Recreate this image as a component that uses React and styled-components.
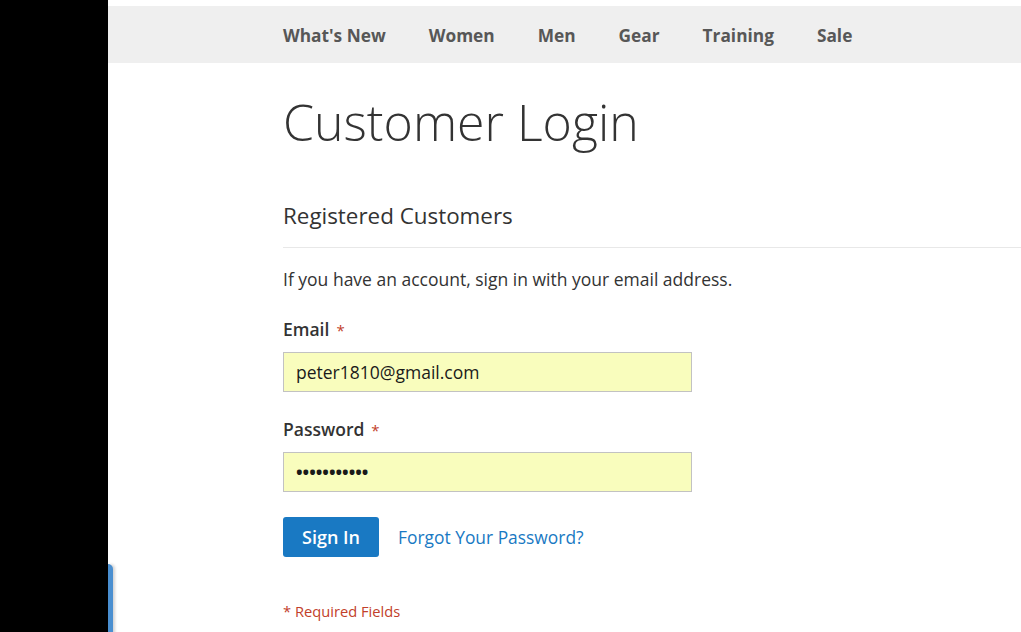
import React from 'react'
import styled, { createGlobalStyle } from 'styled-components'

const GlobalStyle = createGlobalStyle`
  html, body {
    margin: 0;
    padding: 0;
    background: #ffffff;
  }
  body {
    font-family: "Open Sans", "Liberation Sans", sans-serif;
    color: #333333;
    overflow: hidden;
  }
`

const Page = styled.div`
  display: flex;
  height: 632px;
  position: relative;
`

const SideBar = styled.div`
  width: 108px;
  flex-shrink: 0;
  background: #000000;
`

const FeedbackTab = styled.div`
  position: absolute;
  left: 108px;
  top: 564px;
  width: 5px;
  height: 80px;
  background: #4a8fd0;
  border-radius: 0 5px 0 0;
  box-shadow: 2px 0 3px rgba(0, 0, 0, 0.18);
`

const Main = styled.div`
  flex: 1;
  padding-top: 6px;
  min-width: 0;
`

const NavBar = styled.nav`
  box-sizing: border-box;
  display: flex;
  align-items: center;
  height: 57px;
  background: #efefef;
  padding: 2px 0 0 175px;
`

const NavItem = styled.a`
  font-weight: 700;
  font-size: 17.3px;
  color: #575757;
  text-decoration: none;
  margin-right: ${p => p.$gap}px;
`

const Content = styled.div`
  padding-left: 175px;
`

const Title = styled.h1`
  margin: 26px 0 0;
  font-weight: 300;
  font-size: 50px;
  line-height: 66px;
  color: #333333;
`

const BlockTitle = styled.div`
  margin-top: 45px;
  padding-bottom: 16px;
  border-bottom: 1px solid #e8e8e8;
  font-size: 22.4px;
  line-height: 31px;
  color: #333333;
`

const Intro = styled.p`
  margin: 18px 0 0;
  font-size: 17.5px;
  line-height: 26px;
  color: #333333;
`

const Field = styled.div`
  margin-top: ${p => p.$top}px;
`

const Label = styled.label`
  display: block;
  font-weight: 600;
  font-size: 17.5px;
  line-height: 26px;
  color: #333333;

  &::after {
    content: '*';
    color: #c2402a;
    font-size: 15px;
    font-weight: 400;
    margin-left: 7px;
  }
`

const Input = styled.div`
  box-sizing: border-box;
  width: 409px;
  height: 40px;
  margin-top: ${p => p.$top}px;
  background: #f9fdbd;
  border: 1px solid #c2c2c2;
  padding: 0 12px;
  display: flex;
  align-items: center;
  font-size: 17.5px;
  color: #1a1a1a;
  font-weight: ${p => (p.$secret ? 700 : 400)};
`

const Actions = styled.div`
  display: flex;
  align-items: center;
  margin-top: 25px;
`

const PrimaryButton = styled.button`
  box-sizing: border-box;
  width: 96px;
  height: 40px;
  border: none;
  border-radius: 3px;
  background: #1979c3;
  color: #ffffff;
  font-family: "Open Sans", sans-serif;
  font-weight: 600;
  font-size: 18px;
  padding: 0;
`

const Link = styled.a`
  margin-left: 19px;
  font-size: 17.4px;
  color: #1979c3;
  text-decoration: none;
`

const Required = styled.div`
  margin-top: 44px;
  font-size: 14.7px;
  color: #c2402a;
`

const navItems = [
  { label: "What's New", gap: 43 },
  { label: 'Women', gap: 43 },
  { label: 'Men', gap: 43 },
  { label: 'Gear', gap: 43 },
  { label: 'Training', gap: 43 },
  { label: 'Sale', gap: 0 },
]

const App = () => {
  return (
    <>
      <GlobalStyle/>
      <Page>
        <SideBar/>
        <Main>
          <NavBar>
            {navItems.map(item => (
              <NavItem key={item.label} $gap={item.gap}>{item.label}</NavItem>
            ))}
          </NavBar>
          <Content>
            <Title>Customer Login</Title>
            <BlockTitle>Registered Customers</BlockTitle>
            <Intro>If you have an account, sign in with your email address.</Intro>
            <Field $top={24}>
              <Label>Email</Label>
              <Input $top={9}>peter1810@gmail.com</Input>
            </Field>
            <Field $top={24}>
              <Label>Password</Label>
              <Input $top={9} $secret>•••••••••••</Input>
            </Field>
            <Actions>
              <PrimaryButton>Sign In</PrimaryButton>
              <Link>Forgot Your Password?</Link>
            </Actions>
            <Required>* Required Fields</Required>
          </Content>
        </Main>
        <FeedbackTab/>
      </Page>
    </>
  )
}

export default App
